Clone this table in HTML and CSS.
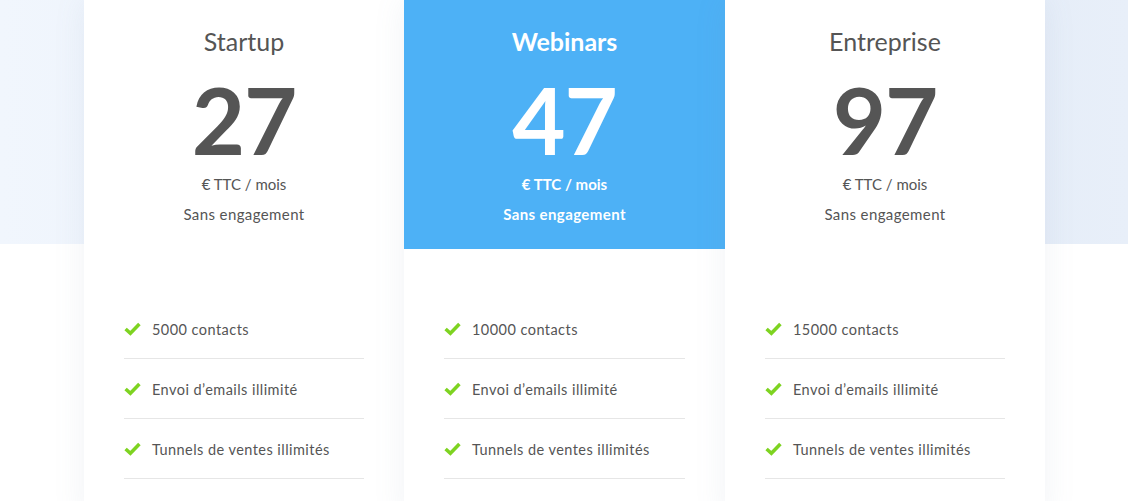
FILE: index.html
```html
<!DOCTYPE html>
<html lang="fr">
<head>
<meta charset="utf-8">
<link rel="stylesheet" href="styles.css">
</head>
<body>
<div class="page">
  <div class="band"></div>
  <div class="cards">
    <div class="card">
      <div class="head">
        <h2 class="title">Startup</h2>
        <div class="price">27</div>
        <div class="unit">€ TTC / mois</div>
        <div class="unit wide">Sans engagement</div>
      </div>
      <ul class="features">
        <li><svg class="check" viewBox="0 0 16 13"><path d="M1.5 6.5 L6 10.5 L14.5 1.8" fill="none" stroke="#7ed321" stroke-width="3.3"/></svg>5000 contacts</li>
        <li><svg class="check" viewBox="0 0 16 13"><path d="M1.5 6.5 L6 10.5 L14.5 1.8" fill="none" stroke="#7ed321" stroke-width="3.3"/></svg>Envoi d’emails illimité</li>
        <li><svg class="check" viewBox="0 0 16 13"><path d="M1.5 6.5 L6 10.5 L14.5 1.8" fill="none" stroke="#7ed321" stroke-width="3.3"/></svg>Tunnels de ventes illimités</li>
      </ul>
    </div>
    <div class="card featured">
      <div class="head">
        <h2 class="title">Webinars</h2>
        <div class="price">47</div>
        <div class="unit">€ TTC / mois</div>
        <div class="unit wide">Sans engagement</div>
      </div>
      <ul class="features">
        <li><svg class="check" viewBox="0 0 16 13"><path d="M1.5 6.5 L6 10.5 L14.5 1.8" fill="none" stroke="#7ed321" stroke-width="3.3"/></svg>10000 contacts</li>
        <li><svg class="check" viewBox="0 0 16 13"><path d="M1.5 6.5 L6 10.5 L14.5 1.8" fill="none" stroke="#7ed321" stroke-width="3.3"/></svg>Envoi d’emails illimité</li>
        <li><svg class="check" viewBox="0 0 16 13"><path d="M1.5 6.5 L6 10.5 L14.5 1.8" fill="none" stroke="#7ed321" stroke-width="3.3"/></svg>Tunnels de ventes illimités</li>
      </ul>
    </div>
    <div class="card">
      <div class="head">
        <h2 class="title">Entreprise</h2>
        <div class="price">97</div>
        <div class="unit">€ TTC / mois</div>
        <div class="unit wide">Sans engagement</div>
      </div>
      <ul class="features">
        <li><svg class="check" viewBox="0 0 16 13"><path d="M1.5 6.5 L6 10.5 L14.5 1.8" fill="none" stroke="#7ed321" stroke-width="3.3"/></svg>15000 contacts</li>
        <li><svg class="check" viewBox="0 0 16 13"><path d="M1.5 6.5 L6 10.5 L14.5 1.8" fill="none" stroke="#7ed321" stroke-width="3.3"/></svg>Envoi d’emails illimité</li>
        <li><svg class="check" viewBox="0 0 16 13"><path d="M1.5 6.5 L6 10.5 L14.5 1.8" fill="none" stroke="#7ed321" stroke-width="3.3"/></svg>Tunnels de ventes illimités</li>
      </ul>
    </div>
  </div>
</div>
</body>
</html>
```

FILE: styles.css
```css
* { box-sizing: border-box; }
html, body { margin: 0; padding: 0; }
body {
  width: 1128px;
  height: 501px;
  overflow: hidden;
  background: #ffffff;
  font-family: Lato, "Liberation Sans", sans-serif;
  color: #555555;
}
.page {
  position: relative;
  height: 501px;
}
.band {
  height: 244px;
  background: linear-gradient(90deg, #f1f6fd 0%, #edf3fc 20%, #e9f0fa 60%, #e5edf8 90%, #e8eff9 100%);
}
.cards {
  position: absolute;
  top: 0;
  left: 84px;
  display: flex;
}
.card {
  width: 320px;
  background: #ffffff;
  box-shadow: 0 0 30px rgba(120, 140, 170, 0.10);
  height: 520px;
}
.card.featured { width: 321px; }
.head {
  height: 249px;
  display: flex;
  flex-direction: column;
  align-items: center;
  padding-top: 25px;
}
.title {
  margin: 0;
  font-size: 25px;
  font-weight: 400;
  line-height: 32px;
  color: #555555;
}
.price {
  font-size: 92px;
  font-weight: 700;
  line-height: 92px;
  margin-top: 17px;
  letter-spacing: -1px;
  color: #555555;
}
.unit {
  font-size: 15px;
  line-height: 30px;
}
.unit.wide { letter-spacing: 0.4px; }
.head .price + .unit { margin-top: 3px; }
.featured .head {
  background: #4db1f6;
  color: #ffffff;
}
.featured .title,
.featured .price { color: #ffffff; }
.featured .title { font-weight: 700; }
.featured .unit { font-weight: 700; }
.features {
  list-style: none;
  margin: 0;
  padding: 50px 40px 0 40px;
}
.features li {
  display: flex;
  align-items: center;
  height: 60px;
  border-bottom: 1px solid #e6e6e6;
  font-size: 14.5px;
  letter-spacing: 0.45px;
  color: #555555;
  padding-top: 2px;
}
.check {
  width: 17px;
  height: 14px;
  margin-right: 11px;
  flex: none;
  position: relative;
  top: -1px;
}
```
